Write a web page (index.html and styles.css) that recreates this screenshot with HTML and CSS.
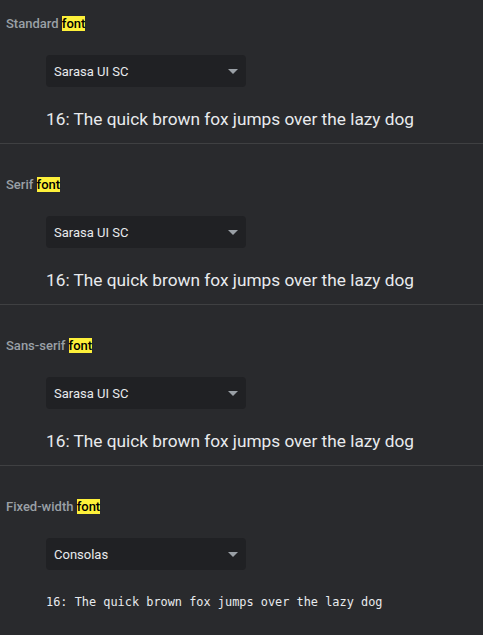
FILE: index.html
```html
<!DOCTYPE html>
<html>
<head>
<meta charset="utf-8">
<link rel="stylesheet" href="styles.css">
</head>
<body>
<div class="page">
  <section class="sec first">
    <div class="label">Standard <mark class="hl">font</mark></div>
    <div class="select"><span>Sarasa UI SC</span><svg class="arrow" width="10" height="5" viewBox="0 0 10 5"><path d="M0 0 L10 0 L5 5 Z" fill="#9aa0a6"/></svg></div>
    <div class="sample">16: The quick brown fox jumps over the lazy dog</div>
  </section>
  <section class="sec">
    <div class="label">Serif <mark class="hl">font</mark></div>
    <div class="select"><span>Sarasa UI SC</span><svg class="arrow" width="10" height="5" viewBox="0 0 10 5"><path d="M0 0 L10 0 L5 5 Z" fill="#9aa0a6"/></svg></div>
    <div class="sample">16: The quick brown fox jumps over the lazy dog</div>
  </section>
  <section class="sec">
    <div class="label">Sans-serif <mark class="hl">font</mark></div>
    <div class="select"><span>Sarasa UI SC</span><svg class="arrow" width="10" height="5" viewBox="0 0 10 5"><path d="M0 0 L10 0 L5 5 Z" fill="#9aa0a6"/></svg></div>
    <div class="sample">16: The quick brown fox jumps over the lazy dog</div>
  </section>
  <section class="sec">
    <div class="label">Fixed-width <mark class="hl">font</mark></div>
    <div class="select"><span>Consolas</span><svg class="arrow" width="10" height="5" viewBox="0 0 10 5"><path d="M0 0 L10 0 L5 5 Z" fill="#9aa0a6"/></svg></div>
    <div class="sample mono">16: The quick brown fox jumps over the lazy dog</div>
  </section>
</div>
</body>
</html>
```
FILE: styles.css
```css
html, body {
  margin: 0;
  padding: 0;
  background: #292a2d;
  height: 100%;
}
.page {
  font-family: Roboto, "Liberation Sans", sans-serif;
  color: #e8eaed;
}
.sec {
  border-top: 1px solid #3f4042;
  padding: 31px 0 12px 0;
}
.sec.first {
  border-top: none;
  padding-top: 14px;
}
.label {
  padding-left: 6px;
  height: 20px;
  line-height: 20px;
  font-size: 13px;
  font-weight: 500;
  color: #9aa0a6;
}
.hl {
  background: #fdf03a;
  color: #000;
  padding: 0;
}
.select {
  margin: 21px 0 0 46px;
  width: 200px;
  height: 32px;
  box-sizing: border-box;
  background: #202124;
  border-radius: 4px;
  display: flex;
  align-items: center;
  justify-content: space-between;
  padding: 0 8px 0 8px;
  font-size: 13px;
  color: #e8eaed;
}
.arrow {
  display: block;
}
.sample {
  margin: 20px 0 0 46px;
  height: 24px;
  line-height: 24px;
  font-size: 17.25px;
  color: #e8eaed;
  white-space: nowrap;
}
.sample.mono {
  font-family: "DejaVu Sans Mono", "Liberation Mono", monospace;
  font-size: 11.9px;
}
```
